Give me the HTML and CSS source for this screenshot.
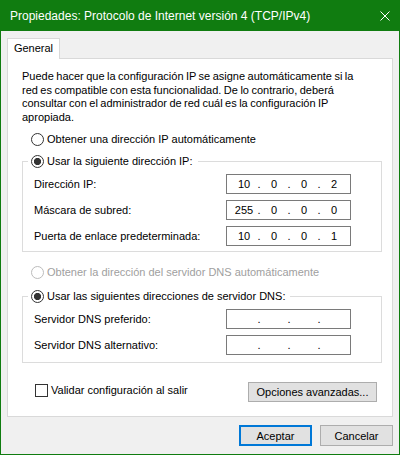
FILE: index.html
```html
<!DOCTYPE html>
<html lang="es">
<head>
<meta charset="utf-8">
<title>Propiedades: Protocolo de Internet versión 4 (TCP/IPv4)</title>
<link rel="stylesheet" href="styles.css">
</head>
<body>
<div class="window">
  <div class="titlebar">
    <span class="title">Propiedades: Protocolo de Internet versión 4 (TCP/IPv4)</span>
    <svg class="close" width="10" height="10" viewBox="0 0 10 10" aria-hidden="true">
      <path d="M0.5 0.5 L9.5 9.5 M9.5 0.5 L0.5 9.5" stroke="#fff" stroke-width="1" fill="none"/>
    </svg>
  </div>
  <div class="content">
    <div class="tabs"><div class="tab">General</div></div>
    <div class="panel">
      <p class="intro">Puede hacer que la configuración IP se asigne automáticamente si la<br>red es compatible con esta funcionalidad. De lo contrario, deberá<br>consultar con el administrador de red cuál es la configuración IP<br>apropiada.</p>

      <div class="radio radio-top"><span class="circle"></span><span>Obtener una dirección IP automáticamente</span></div>

      <fieldset class="group group-ip">
        <legend><span class="radio"><span class="circle checked"></span><span>Usar la siguiente dirección IP:</span></span></legend>
        <div class="field"><span>Dirección IP:</span>
          <div class="ipbox"><span class="oct">10</span><span class="dot">.</span><span class="oct">0</span><span class="dot">.</span><span class="oct">0</span><span class="dot">.</span><span class="oct">2</span></div>
        </div>
        <div class="field"><span>Máscara de subred:</span>
          <div class="ipbox"><span class="oct">255</span><span class="dot">.</span><span class="oct">0</span><span class="dot">.</span><span class="oct">0</span><span class="dot">.</span><span class="oct">0</span></div>
        </div>
        <div class="field"><span>Puerta de enlace predeterminada:</span>
          <div class="ipbox"><span class="oct">10</span><span class="dot">.</span><span class="oct">0</span><span class="dot">.</span><span class="oct">0</span><span class="dot">.</span><span class="oct">1</span></div>
        </div>
      </fieldset>

      <div class="radio radio-disabled"><span class="circle"></span><span>Obtener la dirección del servidor DNS automáticamente</span></div>

      <fieldset class="group group-dns">
        <legend><span class="radio"><span class="circle checked"></span><span>Usar las siguientes direcciones de servidor DNS:</span></span></legend>
        <div class="field"><span>Servidor DNS preferido:</span>
          <div class="ipbox"><span class="oct"></span><span class="dot">.</span><span class="oct"></span><span class="dot">.</span><span class="oct"></span><span class="dot">.</span><span class="oct"></span></div>
        </div>
        <div class="field"><span>Servidor DNS alternativo:</span>
          <div class="ipbox"><span class="oct"></span><span class="dot">.</span><span class="oct"></span><span class="dot">.</span><span class="oct"></span><span class="dot">.</span><span class="oct"></span></div>
        </div>
      </fieldset>

      <div class="bottom-row">
        <div class="check"><span class="box"></span><span>Validar configuración al salir</span></div>
        <button class="btn btn-adv">Opciones avanzadas...</button>
      </div>
    </div>
    <div class="actions">
      <button class="btn btn-default">Aceptar</button>
      <button class="btn">Cancelar</button>
    </div>
  </div>
</div>
</body>
</html>
```

FILE: styles.css
```css
* { box-sizing: border-box; }

html, body {
  margin: 0;
  padding: 0;
  background: #ffffff;
}

body {
  font-family: "Liberation Sans", Arial, sans-serif;
  font-size: 11px;
  color: #000;
}

.window {
  width: 400px;
  height: 455px;
  background: #107c10;
  padding: 0 1px 1px 1px;
  display: flex;
  flex-direction: column;
}

.titlebar {
  height: 31px;
  flex: none;
  display: flex;
  align-items: center;
  padding: 0 9px 0 9px;
  color: #fff;
  font-size: 12px;
}

.title { white-space: nowrap; }

.close {
  margin-left: auto;
  display: block;
}

.content {
  flex: 1;
  background: #f0f0f0;
  padding: 7px 6px 8px 6px;
  display: flex;
  flex-direction: column;
}

.tabs {
  display: flex;
}

.tab {
  position: relative;
  z-index: 1;
  width: 53px;
  height: 21px;
  margin-bottom: -1px;
  background: #fff;
  border: 1px solid #d9d9d9;
  border-bottom: none;
  text-align: center;
  line-height: 18px;
  white-space: nowrap;
}

.panel {
  background: #fff;
  border: 1px solid #d9d9d9;
  padding: 11px 10px 14px 14px;
  display: flex;
  flex-direction: column;
  align-items: stretch;
}

.intro {
  margin: 0;
  line-height: 13.5px;
  white-space: nowrap;
  word-spacing: -0.6px;
}

.radio {
  display: flex;
  align-items: center;
  gap: 3px;
  height: 16px;
  line-height: 16px;
  white-space: nowrap;
}

.radio-top {
  margin: 7px 0 0 9px;
}

.circle {
  width: 13px;
  height: 13px;
  flex: none;
  border: 1px solid #333;
  border-radius: 50%;
  background: #fff;
}

.circle.checked {
  background: radial-gradient(circle, #333 0 3.3px, #fff 3.9px);
}

.radio-disabled {
  margin: 12px 0 0 9px;
  color: #a0a0a0;
}

.radio-disabled .circle {
  border-color: #bcbcbc;
}

.group {
  margin: 0;
  border: 1px solid #dcdcdc;
  min-width: 0;
  padding: 5px 30px 5px 11px;
  display: flex;
  flex-direction: column;
  gap: 6px;
}

.group legend {
  padding: 0 5px 0 3px;
  margin-left: -6px;
}

.group-ip { margin-top: 6px; }

.group-dns {
  margin-top: 8px;
  padding-bottom: 7px;
}

.field {
  display: flex;
  align-items: center;
  justify-content: space-between;
  height: 20px;
  white-space: nowrap;
}

.ipbox {
  width: 125px;
  height: 20px;
  border: 1px solid #7a7a7a;
  background: #fff;
  display: flex;
  align-items: center;
  padding-left: 6px;
  line-height: 18px;
}

.oct {
  width: 22px;
  text-align: center;
}

.dot {
  width: 8px;
  text-align: center;
}

.bottom-row {
  margin-top: 19px;
  display: flex;
  justify-content: space-between;
  align-items: flex-start;
}

.check {
  display: flex;
  align-items: center;
  gap: 3px;
  height: 16px;
  margin-left: 13px;
  white-space: nowrap;
}

.box {
  width: 13px;
  height: 13px;
  border: 1px solid #333;
  background: #fff;
}

.btn {
  font-family: inherit;
  font-size: inherit;
  color: #000;
  background: #e1e1e1;
  border: 1px solid #adadad;
  padding: 0;
  margin: 0;
  height: 20px;
  line-height: 18px;
  white-space: nowrap;
}

.btn-adv {
  width: 129px;
  margin-right: 5px;
}

.actions {
  margin-top: 8px;
  display: flex;
  justify-content: flex-end;
  gap: 8px;
}

.actions .btn {
  width: 73px;
  height: 21px;
}

.btn-default {
  border: 2px solid #0078d7;
}
```
